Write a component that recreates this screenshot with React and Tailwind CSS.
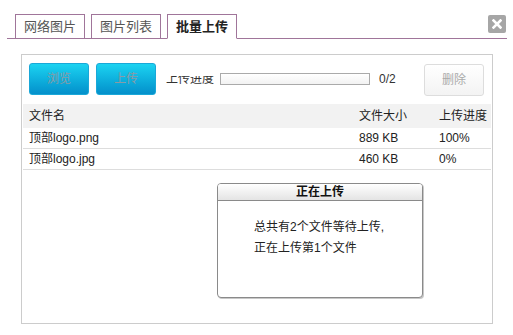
import React from "react";

const font = { fontFamily: '"Liberation Sans", "Noto Sans CJK SC", sans-serif' };

const files = [
  { name: "顶部logo.png", size: "889 KB", progress: "100%" },
  { name: "顶部logo.jpg", size: "460 KB", progress: "0%" },
];

const Tab = ({ label, active }) => (
  <div
    className={
      "w-[70px] h-[25px] border border-[#a0759a] flex items-center justify-center text-[13px] -mb-px " +
      (active ? "bg-white border-b-white font-bold text-[#222]" : "border-b-[#a0759a] text-[#555]")
    }
  >
    {label}
  </div>
);

const BlueButton = ({ label }) => (
  <button className="w-[60px] h-[32px] rounded-[3px] bg-gradient-to-b from-[#1cd3f1] to-[#0590cb] text-[#8a9aa5] text-[12px] border border-[#1aa8d8]">
    {label}
  </button>
);

const App = () => {
  return (
    <div className="w-[513px] h-[335px] bg-white text-[12px] text-[#222]" style={font}>
      <div className="pt-[14px]">
        <div className="ml-[7px] w-[500px] h-[25px] border-b border-[#a0759a] flex items-start pl-[8px] gap-[6px]">
          <Tab label="网络图片" />
          <Tab label="图片列表" />
          <Tab label="批量上传" active />
          <div className="ml-auto mr-[1px] mt-[1px] w-[18px] h-[18px] rounded-[2px] bg-[#a6a6a6] flex items-center justify-center">
            <svg width="10" height="10" viewBox="0 0 10 10">
              <path d="M1.5 1.5 L8.5 8.5 M8.5 1.5 L1.5 8.5" stroke="#fff" strokeWidth="2.6" strokeLinecap="square" />
            </svg>
          </div>
        </div>
      </div>

      <div className="ml-[21px] mt-[15px] w-[472px] h-[270px] border border-[#cccccc] relative">
        <div className="flex items-center pl-[7px] pr-[8px] pt-[7px]">
          <BlueButton label="浏览" />
          <div className="ml-[7px]">
            <BlueButton label="上传" />
          </div>
          <div className="ml-[10px] h-[9px] overflow-hidden mt-[3px]">
            <div className="-mt-[3px] leading-[12px] text-[#333]">上传进度</div>
          </div>
          <div className="ml-[6px] w-[150px] h-[12px] border border-[#aaaaaa] bg-gradient-to-b from-white to-[#f2f2f2]"></div>
          <div className="ml-[9px] text-[#333]">0/2</div>
          <button className="ml-auto w-[60px] h-[32px] mt-[2px] rounded-[3px] border border-[#dddddd] bg-gradient-to-b from-white to-[#f3f3f3] text-[#aaa] text-[12px]">
            删除
          </button>
        </div>

        <div className="mt-[8px] mx-px">
          <div className="h-[24px] bg-[#f2f2f2] flex items-center text-[12px]">
            <div className="pl-[6px] flex-1">文件名</div>
            <div className="w-[80px]">文件大小</div>
            <div className="w-[52px]">上传进度</div>
          </div>
          {files.map((f) => (
            <div key={f.name} className="h-[21px] border-b border-[#dddddd] flex items-center text-[#222]">
              <div className="pl-[6px] flex-1">{f.name}</div>
              <div className="w-[80px]">{f.size}</div>
              <div className="w-[52px]">{f.progress}</div>
            </div>
          ))}
        </div>

        <div className="absolute left-[195px] top-[128px] w-[206px] h-[115px] rounded-[4px] border border-[#8a8a8a] bg-white shadow-[1px_1px_0_#c8c8c8] overflow-hidden">
          <div className="h-[17px] bg-gradient-to-b from-white to-[#e4e4e4] border-b border-[#8a8a8a] flex items-center justify-center font-bold text-[12px] text-[#111]">
            正在上传
          </div>
          <div className="pl-[36px] pt-[16px] leading-[21px] text-[12px] text-[#222]">
            <div>总共有2个文件等待上传,</div>
            <div>正在上传第1个文件</div>
          </div>
        </div>
      </div>
    </div>
  );
};

export default App;
